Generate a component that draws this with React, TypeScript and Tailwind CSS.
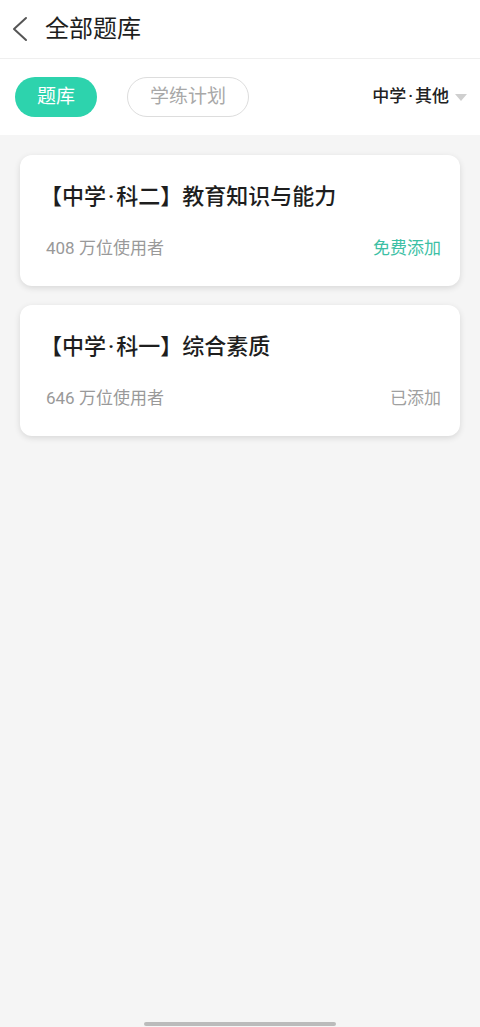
const FONT = { fontFamily: 'Roboto, "Noto Sans CJK SC", sans-serif' };

interface Bank {
  tag: [string, string];
  name: string;
  users: string;
  added: boolean;
}

const banks: Bank[] = [
  { tag: ['中学', '科二'], name: '教育知识与能力', users: '408 万位使用者', added: false },
  { tag: ['中学', '科一'], name: '综合素质', users: '646 万位使用者', added: true },
];

function Dot() {
  return <span className="px-[2px]">·</span>;
}

function BankCard({ bank }: { bank: Bank }) {
  return (
    <div className="h-[131px] rounded-[12px] bg-white pl-[26px] pr-[19px] pt-[26px] shadow-[0_2px_6px_rgba(0,0,0,0.12)]">
      <div className="-ml-[6px] text-[22px] leading-[32px] font-medium text-[#1e1e1e]">
        【{bank.tag[0]}
        <Dot />
        {bank.tag[1]}】{bank.name}
      </div>
      <div className="mt-[23px] flex items-center justify-between text-[17px] leading-[24px]">
        <span className="text-[#999999]">{bank.users}</span>
        {bank.added ? (
          <span className="text-[#a0a0a0]">已添加</span>
        ) : (
          <span className="text-[#3dbfa5]">免费添加</span>
        )}
      </div>
    </div>
  );
}

export default function App() {
  return (
    <div className="relative flex h-[1027px] w-[480px] flex-col bg-[#f5f5f5]" style={FONT}>
      {/* Header */}
      <div className="flex h-[59px] items-center border-b border-[#efefef] bg-white">
        <svg className="ml-[11px]" width="18" height="26" viewBox="0 0 18 26">
          <path d="M15 2 L3 13 L15 24" fill="none" stroke="#555" strokeWidth="2" strokeLinecap="round" strokeLinejoin="round" />
        </svg>
        <span className="ml-[16px] text-[24px] text-[#1e1e1e]">全部题库</span>
      </div>

      {/* Tabs */}
      <div className="flex h-[76px] items-center bg-white pl-[15px] pr-[13px]">
        <div className="flex h-[40px] w-[82px] items-center justify-center rounded-full bg-[#2dd3ad] text-[19px] text-white">
          题库
        </div>
        <div className="ml-[30px] flex h-[40px] w-[122px] items-center justify-center rounded-full border border-[#dddddd] text-[19px] text-[#a8a8a8]">
          学练计划
        </div>
        <div className="ml-auto flex items-center">
          <span className="text-[17px] font-medium text-[#222]">
            中学
            <Dot />
            其他
          </span>
          <svg className="ml-[6px]" width="12" height="7" viewBox="0 0 12 7">
            <path d="M0 0 L12 0 L6 7 Z" fill="#cfcfcf" />
          </svg>
        </div>
      </div>

      {/* List */}
      <div className="flex flex-col gap-[19px] px-[20px] pt-[20px]">
        {banks.map((b) => (
          <BankCard key={b.name} bank={b} />
        ))}
      </div>

      {/* Home indicator */}
      <div className="absolute bottom-[1px] left-[144px] h-[4px] w-[192px] rounded-full bg-[#bbbbbb]" />
    </div>
  );
}
